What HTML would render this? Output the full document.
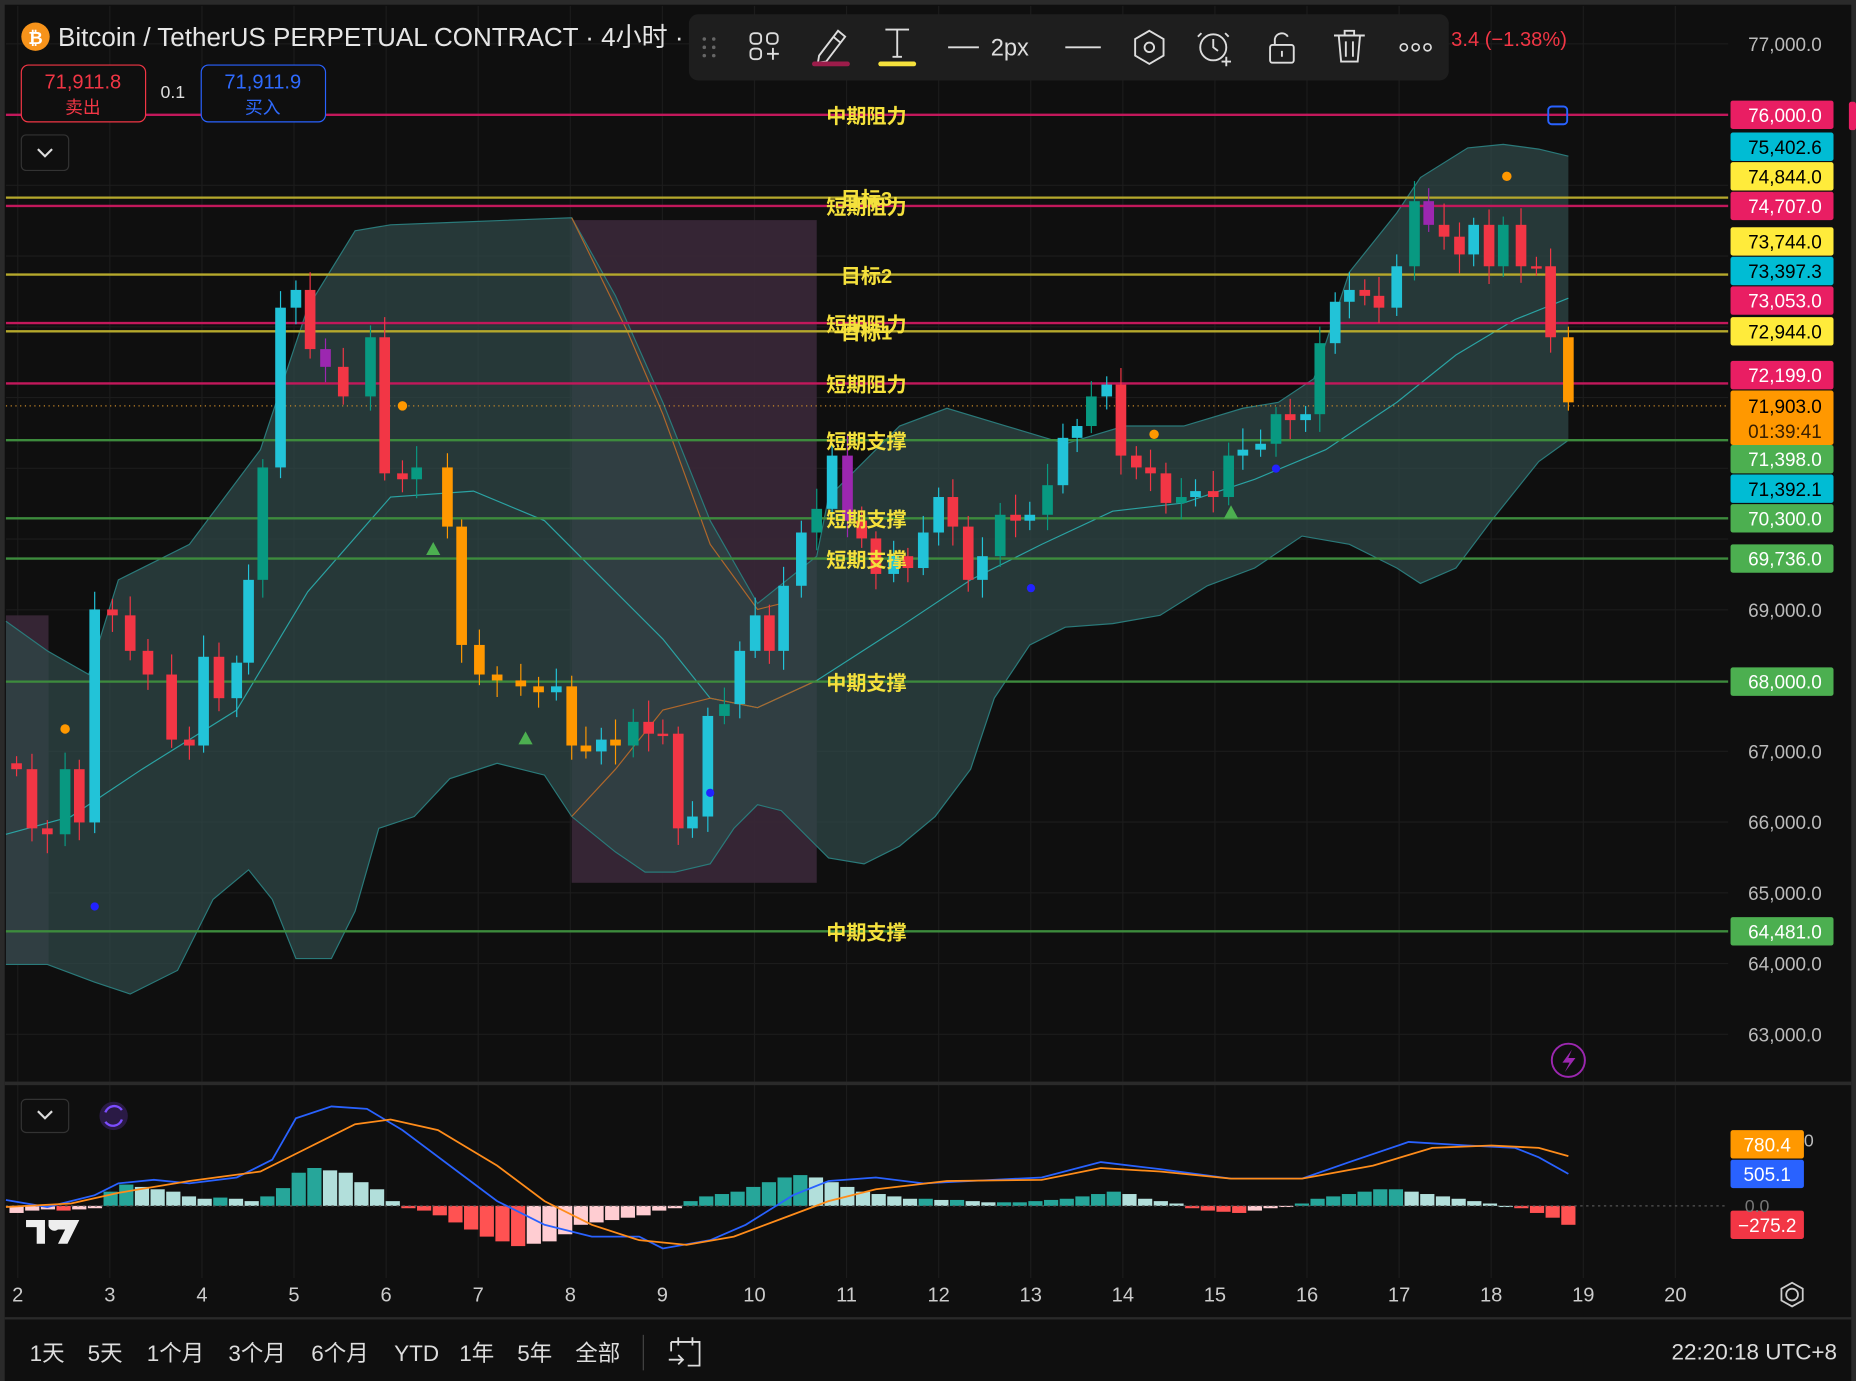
<!DOCTYPE html>
<html><head><meta charset="utf-8"><style>
html,body{margin:0;padding:0;background:#000;overflow:hidden}
svg{display:block}
text{font-family:"Liberation Sans","Noto Sans CJK SC",sans-serif}
</style></head><body>
<svg id="s" width="1856" height="1381" viewBox="0 0 1568 1167" preserveAspectRatio="none" xmlns="http://www.w3.org/2000/svg">
<rect width="1568" height="1167" fill="#2a2a2a"/>
<rect x="4" y="4" width="1560" height="1163" fill="#0f0f0f"/>
<g id="grid" stroke="#1c1c1c" stroke-width="1"></g>
<rect x="483" y="186" width="207" height="560" fill="#3a2838" opacity="0.9"/>
<rect x="5" y="520" width="36" height="295" fill="#3a2838" opacity="0.9"/>
<path d="M5 525 L40 550 L75 570 L100 490 L160 460 L220 380 L260 260 L300 195 L330 190 L380 188 L483 184 L520 250 L560 340 L600 440 L640 510 L690 470 L700 420 L760 360 L800 345 L850 360 L900 375 L950 360 L1000 360 L1050 345 L1080 340 L1110 320 L1140 230 L1180 180 L1200 150 L1240 125 L1270 122 L1300 126 L1325 132 L1325 372 L1300 390 L1260 440 L1230 480 L1200 493 L1180 480 L1140 460 L1100 453 L1060 480 L1020 495 L980 520 L940 527 L900 530 L870 545 L840 590 L820 650 L790 690 L760 715 L730 730 L700 725 L660 685 L640 680 L620 700 L600 730 L570 737 L545 737 L520 720 L483 690 L460 655 L420 645 L380 658 L350 690 L320 700 L300 770 L280 810 L250 810 L230 760 L210 735 L180 760 L150 820 L110 840 L80 830 L40 815 L5 815 Z" fill="#2f4747" opacity="0.75"/>
<path d="M5 525 L40 550 L75 570 L100 490 L160 460 L220 380 L260 260 L300 195 L330 190 L380 188 L483 184 L520 250 L560 340 L600 440 L640 510 L690 470 L700 420 L760 360 L800 345 L850 360 L900 375 L950 360 L1000 360 L1050 345 L1080 340 L1110 320 L1140 230 L1180 180 L1200 150 L1240 125 L1270 122 L1300 126 L1325 132" fill="none" stroke="#2a7a7a" stroke-width="1"/>
<path d="M5 815 L40 815 L80 830 L110 840 L150 820 L180 760 L210 735 L230 760 L250 810 L280 810 L300 770 L320 700 L350 690 L380 658 L420 645 L460 655 L483 690 L520 720 L545 737 L570 737 L600 730 L620 700 L640 680 L660 685 L700 725 L730 730 L760 715 L790 690 L820 650 L840 590 L870 545 L900 530 L940 527 L980 520 L1020 495 L1060 480 L1100 453 L1140 460 L1180 480 L1200 493 L1230 480 L1260 440 L1300 390 L1325 372" fill="none" stroke="#2a7a7a" stroke-width="1"/>
<path d="M5 705 L60 690 L120 650 L200 600 L260 500 L330 420 L400 415 L460 440 L500 480 L560 540 L600 590 L640 598 L690 575 L760 530 L820 490 L880 460 L940 432 L1000 425 L1060 405 L1120 380 L1180 340 L1230 300 L1280 270 L1325 252" fill="none" stroke="#2aa3a3" stroke-width="1"/>
<path d="M483 184 L530 280 L560 350 L600 460 L640 515 L660 510" fill="none" stroke="#b0672a" stroke-width="1"/>
<path d="M483 690 L520 650 L560 600 L600 590 L640 598 L690 575" fill="none" stroke="#b0672a" stroke-width="1"/>
<g id="lines"></g>
<g id="candles"></g>
<g id="marks"></g>
<g id="labels"></g>
<rect x="4" y="914" width="1560" height="3" fill="#2a2a2a"/>
<g id="macd"></g>
<rect x="4" y="1113" width="1560" height="2" fill="#2a2a2a"/>
<g id="scale" font-size="16"></g>
<circle cx="30" cy="31" r="12" fill="#f7931a"/>
<text x="30" y="37" font-size="15" font-weight="bold" fill="#fff" text-anchor="middle">₿</text>
<text x="49" y="39" font-size="22" fill="#e6e6e6">Bitcoin / TetherUS PERPETUAL CONTRACT · 4小时 ·</text>
<text x="1226" y="39" font-size="17" fill="#f23645">3.4 (−1.38%)</text>
<rect x="18" y="55" width="105" height="48" rx="6" fill="#0f0f0f" stroke="#f23645" stroke-width="1"/>
<text x="70" y="75" font-size="17" fill="#f23645" text-anchor="middle">71,911.8</text>
<text x="70" y="96" font-size="15" fill="#f23645" text-anchor="middle">卖出</text>
<text x="146" y="83" font-size="15" fill="#ddd" text-anchor="middle">0.1</text>
<rect x="170" y="55" width="105" height="48" rx="6" fill="#0f0f0f" stroke="#2962ff" stroke-width="1"/>
<text x="222" y="75" font-size="17" fill="#2f6bff" text-anchor="middle">71,911.9</text>
<text x="222" y="96" font-size="15" fill="#2f6bff" text-anchor="middle">买入</text>
<rect x="18" y="114" width="40" height="30" rx="4" fill="#0f0f0f" stroke="#333"/>
<path d="M32 126 L38 132 L44 126" fill="none" stroke="#ddd" stroke-width="1.8"/>
<rect x="582" y="12" width="642" height="56" rx="8" fill="#1e1e1e"/>
<g fill="#666"><circle cx="595" cy="33" r="1.5"/><circle cx="603" cy="33" r="1.5"/><circle cx="595" cy="40" r="1.5"/><circle cx="603" cy="40" r="1.5"/><circle cx="595" cy="47" r="1.5"/><circle cx="603" cy="47" r="1.5"/></g>
<g fill="none" stroke="#ddd" stroke-width="1.6">
<rect x="634" y="28" width="9" height="9" rx="3"/><rect x="648" y="28" width="9" height="9" rx="3"/><rect x="634" y="41" width="9" height="9" rx="3"/><path d="M648 45.5h10M653 40.5v10"/>
<path d="M692 47 L708 26 L714 31 L698 52 L691 53 Z M704 31 L710 36"/>
<path d="M748 25h20M758 25v23M754 48h8"/>
<path d="M801 40h26"/>
<path d="M900 40h30"/>
<path d="M971 26 L983 33 L983 47 L971 54 L959 47 L959 33 Z"/><circle cx="971" cy="40" r="4"/>
<circle cx="1025" cy="40" r="11"/><path d="M1025 33v7l4 3M1015 28l-3 3M1035 28l3 3M1036 48v8M1032 52h8"/>
<rect x="1073" y="38" width="20" height="15" rx="2"/><path d="M1077 38v-5a6 6 0 0 1 11-2M1083 43v5"/>
<path d="M1127 30h26M1136 30v-4h8v4M1131 30l2 22h14l2-22M1137 35v13M1143 35v13"/>
</g>
<rect x="686" y="52" width="32" height="4" rx="2" fill="#9c1c4a"/>
<rect x="742" y="52" width="32" height="4" rx="2" fill="#f5e13c"/>
<text x="837" y="47" font-size="20" fill="#ddd">2px</text>
<g fill="none" stroke="#ddd" stroke-width="1.4"><circle cx="1186" cy="40" r="3"/><circle cx="1196" cy="40" r="3"/><circle cx="1206" cy="40" r="3"/></g>
<circle cx="1325" cy="896" r="14" fill="none" stroke="#9c27b0" stroke-width="1.6"/>
<path d="M1328 887 L1320 898 L1326 898 L1322 906 L1331 894 L1325 894 Z" fill="#9c27b0"/>
<rect x="1308" y="90" width="16" height="15" rx="3" fill="none" stroke="#2962ff" stroke-width="1.6"/>
<rect x="1562" y="86" width="6" height="24" rx="2" fill="#e91e63"/>
<rect x="18" y="929" width="40" height="28" rx="4" fill="#0f0f0f" stroke="#333"/>
<path d="M32 939 L38 945 L44 939" fill="none" stroke="#ddd" stroke-width="1.8"/>
<circle cx="96" cy="943" r="12" fill="#2a1a45"/>
<path d="M89 940 a8 8 0 0 1 14 -2 M103 946 a8 8 0 0 1 -14 2" fill="none" stroke="#7c4dff" stroke-width="2"/>
<path d="M22 1031h16v20h-7v-14h-9z M41 1031h26l-10 20h-8l6-12h-6a5 5 0 0 1-8-3z" fill="#eee"/>
<g id="xax" font-size="17" fill="#ccc" text-anchor="middle"></g>
<g fill="none" stroke="#ccc" stroke-width="1.5"><circle cx="1514" cy="1094" r="5"/><path d="M1514 1084 L1523 1089 L1523 1099 L1514 1104 L1505 1099 L1505 1089 Z"/></g>
<g font-size="19" fill="#ddd">
<text x="25" y="1150">1天</text><text x="74" y="1150">5天</text><text x="124" y="1150">1个月</text><text x="193" y="1150">3个月</text><text x="263" y="1150">6个月</text><text x="333" y="1150">YTD</text><text x="388" y="1150">1年</text><text x="437" y="1150">5年</text><text x="486" y="1150">全部</text>
<text x="1552" y="1149" text-anchor="end">22:20:18 UTC+8</text>
</g>
<rect x="543" y="1128" width="1" height="30" fill="#444"/>
<g fill="none" stroke="#ddd" stroke-width="1.5"><path d="M567 1134h24v20h-10M567 1134v8M573 1130v7M585 1130v7M565 1149h12M573 1145l4 4-4 4"/></g>
</svg>
<script>
const NS="http://www.w3.org/2000/svg";
function el(p,t,a,txt){const e=document.createElementNS(NS,t);for(const k in a)e.setAttribute(k,a[k]);if(txt!==undefined)e.textContent=txt;document.getElementById(p).appendChild(e);return e;}
const Y=p=>37+(77000-p)/1000*59.79;
for(let d=2;d<=20;d++){const x=15+(d-2)*77.8;el('grid','line',{x1:x,y1:5,x2:x,y2:1080});}
for(let p=63000;p<=77000;p+=1000){const y=Y(p);el('grid','line',{x1:5,y1:y,x2:1460,y2:y});}
for(let p=63000;p<=77000;p+=1000){if([76000,75000,74000,73000,72000,71000,70000,68000].includes(p))continue;el('scale','text',{x:1508,y:Y(p)+6,fill:'#bbb','text-anchor':'middle'},p.toLocaleString('en-US')+'.0');}
const L=[[97,'#c2185b','中期阻力'],[167,'#b5a82c','目标3'],[174,'#c2185b','短期阻力'],[232,'#b5a82c','目标2'],[273,'#c2185b','短期阻力'],[280,'#b5a82c','目标1'],[324,'#c2185b','短期阻力'],[372,'#3d8b3d','短期支撑'],[438,'#3d8b3d','短期支撑'],[472,'#3d8b3d','短期支撑'],[576,'#3d8b3d','中期支撑'],[787,'#3d8b3d','中期支撑']];
L.forEach(([y,c])=>el('lines','line',{x1:5,y1:y,x2:1460,y2:y,stroke:c,'stroke-width':2}));
el('lines','line',{x1:5,y1:343,x2:1460,y2:343,stroke:'#c98a2a','stroke-width':1,'stroke-dasharray':'1 3'});
const K=[[14,650],[27,700],[40,705],[55,650],[67,695],[80,515],[95,520],[110,550],[125,570],[145,625],[160,630],[172,555],[185,590],[200,560],[210,490],[222,395],[237,260],[250,245],[262,295],[275,310],[290,335],[313,285],[325,400],[340,405],[352,395],[378,445],[390,545],[405,570],[420,575],[440,580],[455,585],[470,580],[483,630],[495,635],[508,625],[520,630],[535,610],[548,620],[560,620],[573,700],[585,690],[598,605],[612,595],[625,550],[638,520],[650,550],[662,495],[677,450],[690,430],[703,385],[716,440],[728,455],[740,485],[755,470],[767,480],[780,450],[793,420],[805,445],[818,490],[830,470],[845,435],[858,440],[870,435],[885,410],[898,370],[910,360],[922,335],[935,325],[947,385],[960,395],[972,400],[985,425],[998,420],[1010,415],[1025,420],[1038,385],[1050,380],[1065,375],[1078,350],[1090,355],[1103,350],[1115,290],[1128,255],[1140,245],[1153,250],[1165,260],[1180,225],[1195,170],[1207,190],[1220,200],[1233,215],[1245,190],[1258,225],[1270,190],[1285,225],[1298,225],[1310,285],[1325,340]];
let prev=645;
K.forEach(([x,c],i)=>{const o=prev;prev=c;const up=c<o;let col=up?(i%3==0?'#089981':'#22c3d8'):'#f23645';
if(i==K.length-1)col='#ff9800';if(x>=378&&x<=520&&!up)col='#ff9800';if(x==275||x==716||x==1207)col='#9c27b0';
const hi=Math.min(o,c)-6-(i*7%13),lo=Math.max(o,c)+6+(i*5%11);
el('candles','line',{x1:x,y1:hi,x2:x,y2:lo,stroke:col,'stroke-width':1});
el('candles','rect',{x:x-4.5,y:Math.min(o,c),width:9,height:Math.max(2,Math.abs(c-o)),fill:col});});
[[55,616],[340,343],[975,367],[1273,149]].forEach(([x,y])=>el('marks','circle',{cx:x,cy:y,r:4,fill:'#ff9800'}));
[[80,766],[600,670],[871,497],[1078,396]].forEach(([x,y])=>el('marks','circle',{cx:x,cy:y,r:3.5,fill:'#2222ff'}));
[[366,464],[444,624],[1040,433]].forEach(([x,y])=>el('marks','path',{d:`M${x} ${y-6}L${x+6} ${y+5}L${x-6} ${y+5}Z`,fill:'#4caf50'}));
L.forEach(([y,c,t])=>{el('labels','text',{x:732,y:y+7,'font-size':17,'font-weight':'bold',fill:'#f5e13c','text-anchor':'middle'},t);});
const R=[[97,'#e91e63','#fff','76,000.0'],[124,'#00bcd4','#000','75,402.6'],[149,'#ffeb3b','#000','74,844.0'],[174,'#e91e63','#fff','74,707.0'],[204,'#ffeb3b','#000','73,744.0'],[229,'#00bcd4','#000','73,397.3'],[254,'#e91e63','#fff','73,053.0'],[280,'#ffeb3b','#000','72,944.0'],[317,'#e91e63','#fff','72,199.0'],[388,'#4caf50','#fff','71,398.0'],[413,'#00bcd4','#000','71,392.1'],[438,'#4caf50','#fff','70,300.0'],[472,'#4caf50','#fff','69,736.0'],[576,'#4caf50','#fff','68,000.0'],[787,'#4caf50','#fff','64,481.0']];
el('scale','rect',{x:1462,y:330,width:87,height:46,rx:2,fill:'#ff9800'});
el('scale','text',{x:1508,y:349,fill:'#000','text-anchor':'middle'},'71,903.0');
el('scale','text',{x:1508,y:370,fill:'#3a2000','text-anchor':'middle'},'01:39:41');
R.forEach(([y,b,f,t])=>{el('scale','rect',{x:1462,y:y-12,width:87,height:24,rx:2,fill:b});el('scale','text',{x:1508,y:y+6,fill:f,'text-anchor':'middle'},t);});
const z=1019;
const H=[-6,-4,-3,-4,-3,-2,12,18,16,14,12,8,6,7,6,4,8,15,28,32,30,28,20,14,4,-2,-4,-8,-14,-20,-26,-30,-34,-32,-30,-24,-16,-14,-12,-10,-8,-4,-2,4,8,10,12,16,20,24,26,24,20,16,12,10,8,6,6,5,5,4,3,3,3,4,5,6,8,10,12,10,6,4,2,-2,-4,-5,-6,-4,-2,-1,2,6,8,10,12,14,14,12,10,8,6,4,2,0,-2,-6,-10,-16];
const hs=(1325-14)/(H.length-1);
H.forEach((h,i)=>{const x=14+i*hs;let col;if(h>=0){col=(i>0&&h>=H[i-1])?'#26a69a':'#b2dfdb'}else{col=(i>0&&h<=H[i-1])?'#ff5252':'#ffcdd2'}
el('macd','rect',{x:x-6,y:h>=0?z-h:z,width:12,height:Math.abs(h)||1,fill:col});});
el('macd','line',{x1:5,y1:z,x2:1460,y2:z,stroke:'#555','stroke-dasharray':'2 3'});
el('macd','path',{d:'M5 1014 L40 1020 L80 1010 L100 1000 L130 997 L160 1000 L200 995 L230 980 L250 945 L280 935 L310 937 L340 955 L380 985 L420 1015 L460 1035 L500 1045 L540 1045 L560 1055 L600 1048 L630 1035 L670 1010 L700 998 L740 995 L780 1000 L820 998 L880 995 L930 982 L980 988 L1040 996 L1100 996 L1140 982 L1190 965 L1240 968 L1280 970 L1300 978 L1325 992',fill:'none',stroke:'#2962ff','stroke-width':1.5});
el('macd','path',{d:'M5 1020 L60 1017 L100 1008 L160 998 L220 990 L260 970 L300 950 L330 946 L370 955 L420 985 L460 1015 L500 1035 L540 1048 L580 1052 L620 1045 L660 1030 L700 1015 L740 1005 L800 998 L880 997 L930 987 L980 990 L1040 996 L1100 996 L1160 985 L1210 970 L1260 968 L1300 970 L1325 977',fill:'none',stroke:'#ff8c1a','stroke-width':1.5});
[[967,'#ff9800','#fff','780.4'],[992,'#2962ff','#fff','505.1'],[1035,'#f23645','#fff','−275.2']].forEach(([y,b,f,t])=>{el('macd','rect',{x:1462,y:y-12,width:62,height:24,rx:2,fill:b});el('macd','text',{x:1493,y:y+6,fill:f,'font-size':16,'text-anchor':'middle'},t);});
el('macd','text',{x:1474,y:1024,fill:'#777','font-size':15},'0.0');
el('macd','text',{x:1524,y:969,fill:'#bbb','font-size':15},'0');
for(let d=2;d<=20;d++){el('xax','text',{x:15+(d-2)*77.8,y:1100},String(d));}
</script>
</body></html>
